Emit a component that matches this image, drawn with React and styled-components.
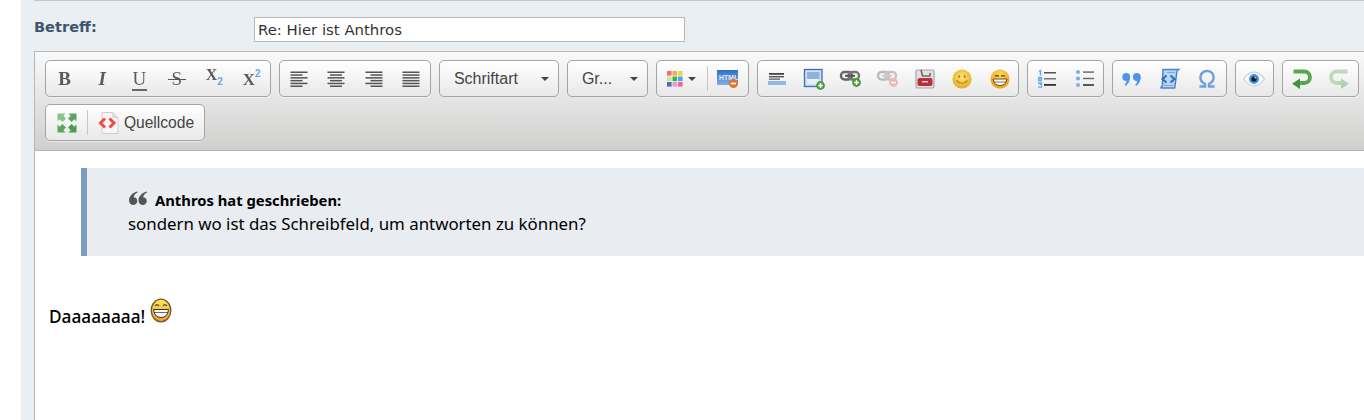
import React from "react";
import styled, { createGlobalStyle } from "styled-components";

const GlobalStyle = createGlobalStyle`
  html, body { margin: 0; padding: 0; background: #fff; overflow: hidden; }
  body { width: 1364px; height: 420px; }
`;

const Page = styled.div`
  margin-left: 21px;
  height: 420px;
  padding-left: 13px;
  background: #eaeff3;
  overflow: hidden;
`;
const TopRule = styled.div`
  height: 1px;
  background: #c4c6c8;
`;
const SubjectRow = styled.div`
  display: flex;
  align-items: flex-start;
  height: 50px;
  padding-top: 16px;
  box-sizing: border-box;
`;
const SubjectLabel = styled.label`
  width: 220px;
  font: bold 14.6px "DejaVu Sans", sans-serif;
  line-height: 20px;
  color: #3f5470;
`;
const SubjectInput = styled.div`
  width: 431px;
  height: 25px;
  box-sizing: border-box;
  border: 1px solid #b8b8b8;
  background: #fff;
  padding-left: 3px;
  font: 14.9px/24px "DejaVu Sans", sans-serif;
  color: #333;
`;
const Editor = styled.div`
  width: 1400px;
  height: 369px;
  border: 1px solid #b6b6b6;
  border-width: 1px 0 0 1px;
  background: #fff;
`;
const Toolbar = styled.div`
  display: flex;
  flex-wrap: wrap;
  gap: 7px 8px;
  align-content: flex-start;
  width: 1330px;
  height: 90px;
  padding: 8px 60px 0 10px;
  background: linear-gradient(#f9f9f9, #cfd0ce);
  border-bottom: 1px solid #b6b6b6;
`;
const Group = styled.div`
  display: flex;
  align-items: center;
  height: 37px;
  box-sizing: border-box;
  border: 1px solid #a4a4a4;
  border-radius: 5px;
  background: linear-gradient(#ffffff, #e8e8e8);
  box-shadow: 0 1px 0 rgba(255, 255, 255, 0.5);
`;
const Btn = styled.div`
  display: flex;
  align-items: center;
  justify-content: center;
  flex: none;
  width: ${(p) => p.$w || 37.4}px;
  height: 35px;
  opacity: ${(p) => (p.$off ? 0.35 : 1)};
  svg { filter: blur(0.35px); }
`;
const Sep = styled.div`
  flex: none;
  width: 1px;
  height: 25px;
  background: #c6c6c6;
`;
const Glyph = styled.span`
  position: relative;
  font-family: "Liberation Serif", serif;
  font-size: ${(p) => p.$size || 19}px;
  font-style: ${(p) => (p.$italic ? "italic" : "normal")};
  font-weight: ${(p) => (p.$thin ? 400 : 700)};
  line-height: 20px;
  color: #5a5a5a;
  top: ${(p) => p.$top || 0}px;
  filter: blur(0.35px);
`;
const UnderBar = styled.i`
  position: absolute;
  left: -1px;
  right: -1px;
  bottom: -2px;
  height: 1.5px;
  background: #666;
`;
const StrikeBar = styled.i`
  position: absolute;
  left: -4px;
  right: -4px;
  top: 10px;
  height: 1.5px;
  background: #555;
`;
const Mini = styled.span`
  font: bold 10px "Liberation Sans", sans-serif;
  color: #6fa5e8;
  position: relative;
  top: ${(p) => p.$top}px;
`;
const Combo = styled.div`
  display: flex;
  align-items: center;
  justify-content: space-between;
  box-sizing: border-box;
  width: ${(p) => p.$w}px;
  height: 37px;
  padding: 0 9px 0 14px;
  border: 1px solid #a4a4a4;
  border-radius: 5px;
  background: linear-gradient(#ffffff, #e8e8e8);
  font: 16px "Liberation Sans", sans-serif;
  color: #444;
`;
const Caret = styled.i`
  display: block;
  width: 0;
  height: 0;
  margin-left: ${(p) => p.$gap || 0}px;
  border: 4px solid transparent;
  border-top: 4px solid #444;
  border-bottom: 0;
`;
const ButtonLabel = styled.span`
  font: 15.6px "Liberation Sans", sans-serif;
  color: #444;
  margin-left: 4px;
`;
const Content = styled.div`
  padding: 17px 0 0 14px;
  font-family: "Noto Sans", "Open Sans", sans-serif;
  color: #000;
`;
const Quote = styled.blockquote`
  margin: 0 0 0 32px;
  height: 88px;
  box-sizing: border-box;
  padding: 18px 0 0 41px;
  background: #e9ecf1;
  border-left: 6px solid #7a9cbf;
`;
const QuoteHead = styled.div`
  display: flex;
  align-items: flex-end;
  gap: 8px;
  height: 25px;
  font-size: 14.8px;
  font-weight: 700;
  line-height: 21px;
  svg { margin-bottom: 6px; margin-left: 1px; }
`;
const QuoteBody = styled.div`
  font-size: 16.85px;
  line-height: 26px;
`;
const Paragraph = styled.p`
  display: flex;
  align-items: baseline;
  gap: 5px;
  margin: 42px 0 0;
  font-size: 17.25px;
  font-weight: 500;
  line-height: 24px;
`;

const I = ({ w = 22, h = 22, children }) => (
  <svg width={w} height={h} viewBox={`0 0 ${w} ${h}`}>{children}</svg>
);

// toolbar drawings
const AlignIcon = ({ kind }) => {
  const rows = [0, 1, 2, 3, 4, 5];
  return (
    <I w={18} h={18}>
      {rows.map((r) => {
        const short = kind !== "justify" && r % 2 === 1;
        const len = short ? 12 : 17;
        const x = kind === "center" ? (17 - len) / 2 : kind === "right" ? 17 - len : 0;
        return <rect key={r} x={x + 0.5} y={1.5 + r * 2.8} width={len} height={1.5} fill="#555" />;
      })}
    </I>
  );
};
const PlusBadge = ({ cx, cy, fill = "#4c9a3c" }) => (
  <g>
    <circle cx={cx} cy={cy} r="4.4" fill={fill} />
    <path d={`M${cx - 2.4} ${cy}h4.8M${cx} ${cy - 2.4}v4.8`} stroke="#fff" strokeWidth="1.5" />
  </g>
);
const ParagraphIcon = () => (
  <I>
    <rect x="3" y="5" width="15" height="1.8" fill="#444" />
    <rect x="3" y="8" width="15" height="1.4" fill="#555" />
    <rect x="3" y="10.4" width="11" height="1.4" fill="#666" />
    <rect x="2" y="13" width="18" height="4" fill="#8fb8ee" />
  </I>
);
const ImageIcon = () => (
  <I w={24} h={24}>
    <rect x="2.5" y="2.5" width="17.5" height="17" fill="#cfe0f2" stroke="#3f6eb0" strokeWidth="1.3" />
    <rect x="5" y="5" width="12.5" height="10" fill="#8db4dc" />
    <rect x="5" y="12" width="12.5" height="5" fill="#e8eef5" />
    <PlusBadge cx="18.5" cy="18.5" />
  </I>
);
const LinkIcon = ({ off }) => (
  <I w={24} h={24}>
    <rect x="2" y="5" width="11" height="7.5" rx="3.5" fill="none" stroke={off ? "#bbb" : "#666"} strokeWidth="2.4" />
    <rect x="9.5" y="5" width="10.5" height="7.5" rx="3.5" fill="none" stroke={off ? "#c4c4c4" : "#777"} strokeWidth="2.4" />
    <rect x="6" y="7.8" width="10" height="2" fill={off ? "#ccc" : "#555"} />
    {off ? (
      <g>
        <circle cx="17.5" cy="15.5" r="4.4" fill="#e8bda8" />
        <rect x="15" y="14.8" width="5" height="1.5" fill="#fff" />
      </g>
    ) : (
      <PlusBadge cx="17.5" cy="15.5" />
    )}
  </I>
);
const VideoIcon = () => (
  <I>
    <rect x="2" y="2" width="18" height="18" rx="1.5" fill="#e4e0e0" stroke="#a5a5a5" strokeWidth="1.2" />
    <path d="M7 2l1.5 6h7.5V5" fill="none" stroke="#6b6b6b" strokeWidth="1.6" />
    <rect x="3.5" y="10" width="15" height="8" rx="2" fill="#b92f39" />
    <rect x="8" y="13" width="6" height="1.5" fill="#f3c4c6" />
  </I>
);
const Smile = () => (
  <I>
    <defs>
      <radialGradient id="sm" cx="50%" cy="40%" r="60%">
        <stop offset="0%" stopColor="#fde77a" />
        <stop offset="100%" stopColor="#e9aa1f" />
      </radialGradient>
    </defs>
    <circle cx="11" cy="11" r="9.6" fill="url(#sm)" />
    <ellipse cx="8.3" cy="8.5" rx="1" ry="1.6" fill="#a88a25" />
    <ellipse cx="13.7" cy="8.5" rx="1" ry="1.6" fill="#a88a25" />
    <path d="M5.5 12.5q5.5 6 11 0" fill="none" stroke="#a88a25" strokeWidth="1.2" />
  </I>
);
const Grin = () => (
  <I>
    <defs>
      <radialGradient id="gr" cx="50%" cy="35%" r="65%">
        <stop offset="0%" stopColor="#fde06a" />
        <stop offset="100%" stopColor="#f09a14" />
      </radialGradient>
    </defs>
    <circle cx="11" cy="11" r="9.6" fill="url(#gr)" />
    <path d="M6 8.5q2-2 4 0M12 8.5q2-2 4 0" fill="none" stroke="#6b5010" strokeWidth="1.2" />
    <path d="M4 11h14q-1 6.5-7 6.5t-7-6.5z" fill="#fff" stroke="#6b5010" strokeWidth="1" />
    <path d="M4.5 14h13" stroke="#6b5010" strokeWidth="0.8" />
  </I>
);
const NumberedList = () => (
  <I>
    <path d="M3 3.5l1.5-1v5" fill="none" stroke="#6fa5e8" strokeWidth="1.4" />
    <path d="M2 9.5h3.5v1.6h-3v1.6h3.5M2 15h3.5v1.4h-2M2 19.2h3.5v-2" fill="none" stroke="#6fa5e8" strokeWidth="1.3" />
    <rect x="8" y="4" width="12" height="1.5" fill="#555" />
    <rect x="8" y="10" width="12" height="1.5" fill="#777" />
    <rect x="8" y="16" width="12" height="1.8" fill="#333" />
  </I>
);
const BulletList = () => (
  <I>
    {[4, 10.5, 17].map((y) => <circle key={y} cx="4" cy={y} r="2.1" fill="#7fb0ea" />)}
    <rect x="9" y="3.4" width="11" height="1.4" fill="#666" />
    <rect x="9" y="9.8" width="11" height="1.4" fill="#666" />
    <rect x="9" y="16.2" width="11" height="1.6" fill="#333" />
  </I>
);
const QuoteMarks = () => (
  <I>
    <g fill="#4d94ea" transform="translate(0 2.5)">
      <circle cx="5.2" cy="6.5" r="3.9" />
      <path d="M9.1 6.5c0 4-1.8 7-4.600 9l-1-.9c1.400-1.400 2-2.800 2-4.600z" />
      <circle cx="15.8" cy="6.5" r="3.9" />
      <path d="M19.7 6.5c0 4-1.8 7-4.600 9l-1-.9c1.400-1.400 2-2.800 2-4.600z" />
    </g>
  </I>
);
const ScrollCode = () => (
  <I w={24} h={24}>
    <path d="M6 2.500h15.500c-1.500 1-1.800 2-1.800 3.500l-2 15H3.500c1.500-.8 1.800-2 2-3.500z" fill="#b9d5f3" stroke="#4a86cc" strokeWidth="1.5" />
    <path d="M9.500 8.500l-4 3.500 4 3.500M13.500 8.500l4 3.500-4 3.500" fill="none" stroke="#2b6fc2" strokeWidth="2" />
    <path d="M10 5.500h8M7 18.500h9" stroke="#7aa9de" strokeWidth="1.2" />
  </I>
);
const Omega = () => (
  <I>
    <path d="M3.500 18.500h5.500v-2.500c-3-1.500-4.600-3.800-4.600-6.500 0-4 3-6.500 6.600-6.500s6.600 2.500 6.600 6.500c0 2.700-1.600 5-4.600 6.500v2.500h5.500" fill="none" stroke="#6d9ee0" strokeWidth="2.4" />
  </I>
);
const Eye = () => (
  <I w={24} h={22}>
    <path d="M1.500 11q10.500-14 21 0q-10.500 14-21 0z" fill="#fff" stroke="#b9cfe6" strokeWidth="1.2" />
    <circle cx="12" cy="11" r="5" fill="#3f97e6" />
    <circle cx="12" cy="11" r="2.6" fill="#151515" />
    <circle cx="13.2" cy="9.8" r=".8" fill="#fff" />
  </I>
);
const Undo = ({ flip }) => (
  <I w={22} h={22}>
    <g transform={flip ? "translate(22 0) scale(-1 1)" : undefined}>
      <path d="M2.500 3.500h10.500c3.700 0 6 2.500 6 5.800s-2.300 5.700-6 5.700H6" fill="none" stroke="#5aa551" strokeWidth="3.8" />
      <path d="M9 10.500v10.500l-8-5.200z" fill="#3e9440" />
    </g>
  </I>
);
const Expand = () => (
  <I>
    <path d="M1.500 1.500h8l-2.200 2.200 2.700 2.700-3.600 3.600-2.700-2.700-2.200 2.200z" fill="#86c58a" />
    <path d="M20.500 1.500h-8l2.200 2.200-2.700 2.700 3.600 3.600 2.700-2.700 2.200 2.200z" fill="#5aa561" />
    <path d="M1.500 20.500h8l-2.200-2.200 2.700-2.700-3.600-3.600-2.700 2.700-2.200-2.200z" fill="#5aa561" />
    <path d="M20.500 20.500h-8l2.200-2.200-2.700-2.700 3.600-3.600 2.700 2.700 2.200-2.200z" fill="#4c9a55" />
  </I>
);
const SourceDoc = () => (
  <I w={22} h={24}>
    <path d="M4 1.500h11l5 5v16H4z" fill="#f6f6f6" stroke="#cfcfcf" strokeWidth="1" />
    <path d="M15 1.500v5h5" fill="#e2e2e2" stroke="#cfcfcf" strokeWidth="1" />
    <path d="M7 7.500l-4.500 4.500 4.500 4.500M11.500 7.500l4.500 4.500-4.500 4.500" fill="none" stroke="#ef4a44" strokeWidth="3" />
  </I>
);
const ColorGrid = () => {
  const colors = ["#f56a6a", "#f7a85a", "#e9d44f", "#cfe39d", "#38b44c", "#4ba7e2", "#4a6fb0", "#e29ad9", "#f6609c"];
  return (
    <I w={16} h={16}>
      {colors.map((c, i) => (
        <rect key={c} x={(i % 3) * 5.5} y={Math.floor(i / 3) * 5.5} width="4.6" height="4.6" fill={c} />
      ))}
    </I>
  );
};
const HtmlIcon = () => (
  <I w={24} h={20}>
    <defs>
      <linearGradient id="ht" x1="0" x2="0" y1="0" y2="1">
        <stop offset="0%" stopColor="#2f6fc8" />
        <stop offset="100%" stopColor="#7fb0e8" />
      </linearGradient>
    </defs>
    <rect x="1" y="1" width="21" height="15" fill="url(#ht)" />
    <text x="3" y="11" fontFamily="Liberation Sans" fontSize="7" fontWeight="700" fill="#e4effb">HTML</text>
    <circle cx="17.5" cy="14.5" r="4.5" fill="#e2762a" />
    <rect x="15" y="13.7" width="5" height="1.6" fill="#fff" />
  </I>
);
const QuoteMark = () => (
  <svg width="18" height="14" viewBox="0 0 18 14">
    <path d="M8.200.5C4 1.500 0 5 0 9.500 0 12 2 14 4.300 14 6.500 14 8.300 12.200 8.300 10S6.600 6.200 4.600 6.200C5 4 6.300 2.500 8.600 1.500z" fill="#555" />
    <path d="M17.700.5C13.500 1.500 9.500 5 9.500 9.500c0 2.500 2 4.500 4.300 4.500 2.200 0 4-1.800 4-4s-1.700-3.800-3.700-3.800c.4-2.200 1.700-3.700 4-4.700z" fill="#555" />
  </svg>
);
const Emoticon = () => (
  <svg width="22" height="25" viewBox="0 0 22 25">
    <defs>
      <linearGradient id="em" x1="0" x2="0" y1="0" y2="1">
        <stop offset="0%" stopColor="#ffe95c" />
        <stop offset="100%" stopColor="#f29a18" />
      </linearGradient>
    </defs>
    <ellipse cx="11" cy="12.5" rx="9.8" ry="11.3" fill="url(#em)" stroke="#6e5a3a" strokeWidth="1.3" />
    <path d="M5 8q2-2.500 4 0M13 8q2-2.500 4 0" fill="none" stroke="#333" strokeWidth="1.2" />
    <path d="M3.500 11.500h15q-.8 8-7.500 8t-7.500-8z" fill="#fff" stroke="#333" strokeWidth="1" />
    <path d="M4 14.500h14" stroke="#444" strokeWidth="0.8" />
  </svg>
);

export default function App() {
  return (
    <>
      <GlobalStyle />
      <Page>
        <TopRule />
        <SubjectRow>
          <SubjectLabel>Betreff:</SubjectLabel>
          <SubjectInput>Re: Hier ist Anthros</SubjectInput>
        </SubjectRow>
        <Editor>
          <Toolbar>
            <Group>
              <Btn><Glyph>B</Glyph></Btn>
              <Btn><Glyph $italic>I</Glyph></Btn>
              <Btn><Glyph $thin>U<UnderBar /></Glyph></Btn>
              <Btn><Glyph $thin>S<StrikeBar /></Glyph></Btn>
              <Btn><Glyph $size={16} $top={-4}>X</Glyph><Mini $top={3}>2</Mini></Btn>
              <Btn><Glyph $size={17} $top={1}>X</Glyph><Mini $top={-5}>2</Mini></Btn>
            </Group>
            <Group>
              <Btn><AlignIcon kind="left" /></Btn>
              <Btn><AlignIcon kind="center" /></Btn>
              <Btn><AlignIcon kind="right" /></Btn>
              <Btn><AlignIcon kind="justify" /></Btn>
            </Group>
            <Combo $w={120}>Schriftart<Caret /></Combo>
            <Combo $w={81}>Gr...<Caret /></Combo>
            <Group>
              <Btn $w={50}><ColorGrid /><Caret $gap={5} /></Btn>
              <Sep />
              <Btn $w={40}><HtmlIcon /></Btn>
            </Group>
            <Group>
              <Btn $w={37.2}><ParagraphIcon /></Btn>
              <Btn $w={37.2}><ImageIcon /></Btn>
              <Btn $w={37.2}><LinkIcon /></Btn>
              <Btn $w={37.2}><LinkIcon off /></Btn>
              <Btn $w={37.2}><VideoIcon /></Btn>
              <Btn $w={37.2}><Smile /></Btn>
              <Btn $w={37.2}><Grin /></Btn>
            </Group>
            <Group>
              <Btn $w={37.6}><NumberedList /></Btn>
              <Btn $w={37.6}><BulletList /></Btn>
            </Group>
            <Group>
              <Btn><QuoteMarks /></Btn>
              <Btn><ScrollCode /></Btn>
              <Btn><Omega /></Btn>
            </Group>
            <Group>
              <Btn><Eye /></Btn>
            </Group>
            <Group>
              <Btn><Undo /></Btn>
              <Btn $off><Undo flip /></Btn>
            </Group>
            <Group>
              <Btn $w={41}><Expand /></Btn>
              <Sep />
              <Btn $w={116}><SourceDoc /><ButtonLabel>Quellcode</ButtonLabel></Btn>
            </Group>
          </Toolbar>
          <Content>
            <Quote>
              <QuoteHead><QuoteMark />Anthros hat geschrieben:</QuoteHead>
              <QuoteBody>sondern wo ist das Schreibfeld, um antworten zu können?</QuoteBody>
            </Quote>
            <Paragraph>Daaaaaaaa!<Emoticon /></Paragraph>
          </Content>
        </Editor>
      </Page>
    </>
  );
}
